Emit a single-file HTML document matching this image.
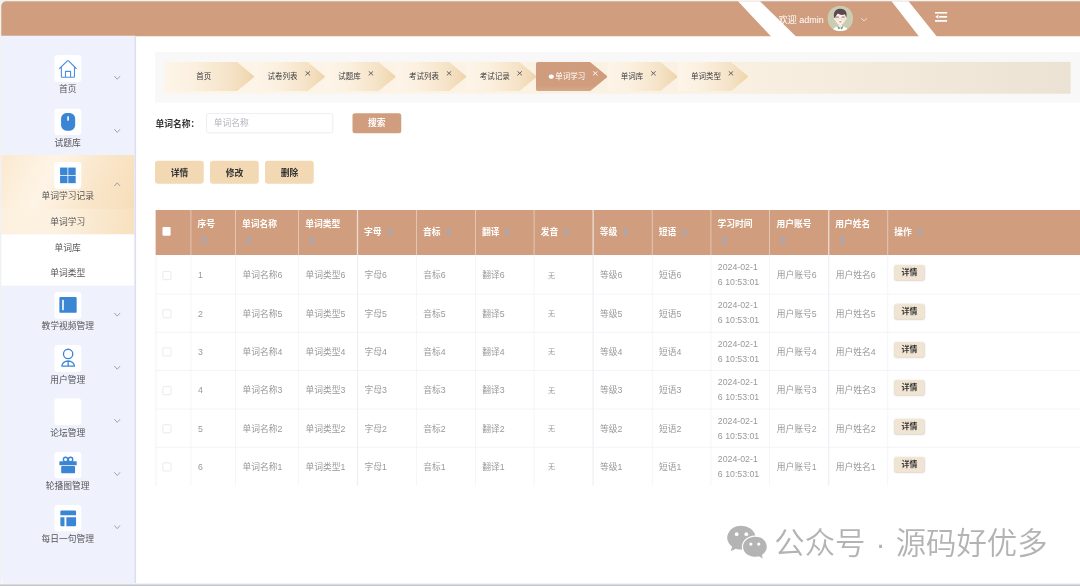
<!DOCTYPE html>
<html lang="zh-CN">
<head>
<meta charset="utf-8">
<title>单词学习</title>
<style>
html,body{width:1080px;height:586px;overflow:hidden;background:#fff;margin:0;padding:0}
body{position:relative}
*{box-sizing:border-box;margin:0;padding:0}
#root{position:absolute;left:0;top:0;width:1728px;height:937.6px;overflow:hidden;background:#fff;font-family:"Liberation Sans","Noto Sans CJK SC",sans-serif;font-size:14px;color:#333}
.abs{position:absolute}
#topline{position:absolute;left:0;top:0;width:1728px;height:1.92px;background:#f4f4f4}
#corner{position:absolute;left:0;top:0;width:11.2px;height:11.2px;background:#f1f1f1}
#leftline{position:absolute;left:0;top:0;width:2.08px;height:937.6px;background:#f1f1f1}
#header{position:absolute;left:2.08px;top:1.92px;width:1725.92px;height:55.84px;background:#d09e7e;border-top-left-radius:8px}
#header svg.stripes{position:absolute;left:-2.08px;top:0;width:1728px;height:64px}
#welcome{position:absolute;left:1243.84px;top:0.96px;height:55.52px;line-height:56.64px;color:#fff;font-size:14.4px;white-space:nowrap}
#avatar{position:absolute;left:1321.92px;top:7.52px;width:40.96px;height:40.96px}
/* sidebar */
#sidebar{position:absolute;left:2.08px;top:57.44px;width:215.52px;height:875.68px;background:#eff1fd;border-right:3.2px solid #dcdff1;border-bottom-left-radius:6.4px;overflow:hidden}
.mi{position:absolute;left:0;width:212.64px;height:85.44px}
.mi .ib{position:absolute;left:84.64px;top:10.88px;width:42.88px;height:42.72px;background:#fff;border-radius:4.8px}
.mi .ib svg{position:absolute;left:0;top:0;width:42.88px;height:42.72px}
.mi .tx{position:absolute;left:0;width:212.64px;top:55.2px;height:20.8px;line-height:20.8px;text-align:center;font-size:14px;color:#555;white-space:nowrap}
.mi .cv{position:absolute;left:180.16px;top:42.56px;width:11.2px;height:8px}
.mi.act{height:87.04px;background:linear-gradient(115deg,#fbe9cf 0%,#fef4e6 35%,#f9e5c8 70%,#f6deba 100%)}
.sub{position:absolute;left:0;width:212.64px;height:41.04px;line-height:42.24px;text-align:center;font-size:14px;color:#555;background:#fff}
.sub.act{background:linear-gradient(100deg,#fdf0de 0%,#fdf2e2 40%,#f7e0bd 100%)}
/* main */
#tagwrap{position:absolute;left:248.48px;top:83.36px;width:1480px;height:80.8px;background:#f8f8f8}
#tagstrip{position:absolute;left:262.72px;top:98.88px;width:1450.56px;height:51.2px;background:linear-gradient(90deg,#fdf5e8 0%,#fbf1e2 60%,#ebe2d4 100%)}
.tag{position:absolute;top:99.04px;height:46.88px;background:linear-gradient(90deg,#fdf5e9 0%,#fcf1e1 28%,#f5e3c7 74%,#eed4ab 100%);clip-path:polygon(0 0,calc(100% - 27.84px) 0,calc(100% - 0.96px) 47%,100% 50%,calc(100% - 0.96px) 53%,calc(100% - 27.84px) 100%,0 100%)}
.tag .t{position:absolute;top:0;height:46.4px;line-height:47.04px;font-size:12px;color:#393b3f;white-space:nowrap}
.tag .x{position:absolute;top:13.92px;width:8.96px;height:8.64px}
.tag.on{background:linear-gradient(180deg,#cf9d7d 0%,#cf9d7d 80%,#d6a98c 100%);border-radius:4.8px 0 0 4.8px}
.tag.on .t{color:#fff}
#lbl{position:absolute;left:248.96px;top:181.6px;height:32px;line-height:32px;font-weight:bold;font-size:14px;color:#333;white-space:nowrap}
#inp{position:absolute;left:329.76px;top:180.8px;width:203.2px;height:32px;border:1px solid #e1e4ea;border-radius:4px;background:#fff;font-size:14px;line-height:31.04px;padding-left:11.2px;color:#b2b5bd;white-space:nowrap}
#sbtn{position:absolute;left:564px;top:180.8px;width:77.76px;height:32.32px;border-radius:4px;background:#d09e7e;color:#fff;font-weight:bold;font-size:14px;text-align:center;line-height:33.6px}
.btn{position:absolute;top:256.8px;width:77.76px;height:37.44px;border-radius:4.8px;background:#f2d9b4;color:#333;font-weight:bold;font-size:14px;text-align:center;line-height:40.64px}
/* table */
#thead{position:absolute;left:249.12px;top:335.68px;width:1480px;height:71.84px;background:#d09e7e}
.th{position:absolute;top:0;height:71.84px;color:#fff;font-weight:bold;font-size:14px;white-space:nowrap;padding-left:10.56px}
.th.one{line-height:70.08px}
.th.two{line-height:45.12px}
.hl{position:absolute;top:0;width:1.12px;height:71.84px;background:#ecdfd7}
.car{position:absolute;width:9.92px;height:13.12px}
.car.c1{top:29.6px}
.car.c2{top:42.08px;left:16.64px}
#tbody{position:absolute;left:249.12px;top:407.52px;width:1480px;height:369.92px}
.vl{position:absolute;top:0;width:1.12px;height:369.6px;background:#eef0f6}
.tr{position:absolute;left:0;width:1480px;height:61.36px;border-bottom:1.12px solid #ebeef5}
.tr.last{border-bottom-color:transparent}
.td{position:absolute;top:0;height:61.36px;line-height:62.24px;color:#999;font-size:14px;padding-left:11.04px;white-space:nowrap}
.td.dt{line-height:24px;padding-top:5.92px}
.td .dtx{display:block;width:68.8px;white-space:normal;word-break:break-all}
.td .wu{font-size:11.2px;padding-left:11.2px;position:relative;top:-1.6px}
.cb{position:absolute;left:10.88px;top:24.32px;width:14px;height:14px;border:1px solid #dcdfe6;border-radius:2.08px;background:#fff}
.dbtn{position:absolute;left:10.56px;top:15.2px;width:48.48px;height:24px;border-radius:4.8px;background:#f0e4d2;box-shadow:0 0.96px 2.4px rgba(120,90,50,.25);color:#333;font-weight:bold;font-size:12.64px;line-height:25.28px;text-align:center}
#wm{word-spacing:2.56px;position:absolute;left:1238.88px;top:833.6px;height:70.4px;line-height:70.4px;font-size:48.64px;color:#b3b3b3;white-space:nowrap;font-weight:350}
#wmicon{position:absolute;left:1161.6px;top:840px;width:65.6px;height:54.4px}
#botline1{position:absolute;left:0;top:933.12px;width:1728px;height:1.92px;background:#f4f2ef}
#botline2{position:absolute;left:0;top:934.88px;width:1728px;height:2.72px;background:#c5c8d1}
#root{transform:scale(.625);transform-origin:0 0;filter:opacity(1)}
</style>
</head>
<body>
<div id="root">
<div id="topline"></div><div id="leftline"></div><div id="corner"></div>
<div id="header">
<svg class="stripes" viewBox="0 0 1080 40" preserveAspectRatio="none"><polygon points="736.9,-1.2 758.8,-1.2 800.9,40 775.5,40" fill="#fff"/><polygon points="890.6,-1.2 907.6,-1.2 940.6,40 922.7,40" fill="#fff"/></svg>
<div id="welcome">欢迎 admin</div>
<svg id="avatar" viewBox="0 0 64 64">
<defs><clipPath id="avc"><circle cx="32" cy="32" r="32"/></clipPath></defs>
<circle cx="32" cy="32" r="32" fill="#cacdb2"/>
<g clip-path="url(#avc)">
<path d="M11.5 67 C12.5 55.5 21 51.8 32 51.8 C43 51.8 51.5 55.5 52.5 67 Z" fill="#fdfdfd"/>
<path d="M27.5 42 h9 v9.5 l-4.5 4.5 l-4.5 -4.5 z" fill="#fbe5d6"/>
<path d="M24.2 50.3 L32 56 L27.8 59.5 Z M39.8 50.3 L32 56 L36.2 59.5 Z" fill="#5d9c80"/>
<path d="M18.5 30 C18.5 22 24 17 32 17 C40 17 45.5 22 45.5 30 C45.5 40 38 47.8 32 47.8 C26 47.8 18.5 40 18.5 30 Z" fill="#fdf0e6"/>
<ellipse cx="18.3" cy="33" rx="1.8" ry="3" fill="#fdf0e6"/><ellipse cx="45.7" cy="33" rx="1.8" ry="3" fill="#fdf0e6"/>
<path d="M17.3 31 C13.5 21 17.5 8.5 31 7.6 C44.5 6.8 50.5 17 46.8 29.5 C45.8 26.5 44.8 23.5 43.5 21.5 C38 24.5 30.5 23.5 26.2 20 C23.5 22.5 20.5 25.5 19.3 31 Z" fill="#5d4552"/>
<path d="M21.3 28.7 h7 M35.7 28.7 h7" stroke="#5f4954" stroke-width="1.9"/>
<circle cx="25" cy="32" r="3.9" fill="none" stroke="#b9aaa9" stroke-width="0.7"/><circle cx="39" cy="32" r="3.9" fill="none" stroke="#b9aaa9" stroke-width="0.7"/>
<path d="M28.9 32 h6.2" stroke="#b9aaa9" stroke-width="0.7"/>
<path d="M27.8 40.4 q4.2 -2.4 8.4 0 q-4.2 3.6 -8.4 0z" fill="#ec6862"/>
</g></svg>
<svg class="abs" style="left:1374.56px;top:25.92px;width:11.2px;height:7.04px" viewBox="0 0 14 8.8"><path d="M1 1.2 L7 7.2 L13 1.2" fill="none" stroke="#fff" stroke-width="1.3"/></svg>
<svg class="abs" style="left:1493.92px;top:17.12px;width:19.52px;height:16px" viewBox="0 0 12.2 10"><rect x="0" y="0" width="12.2" height="1.7" fill="#fff"/><rect x="4.2" y="4.1" width="8" height="1.7" fill="#fff"/><rect x="0" y="8.2" width="12.2" height="1.7" fill="#fff"/><path d="M0.3 4.95 L3.4 2.9 V7 Z" fill="#fff"/></svg>
</div>
<div id="sidebar">
<div class="mi" style="top:19.68px">
<div class="ib"><svg viewBox="0 0 26.8 26.7"><path d="M5.2 13.5 L12.9 5.9 Q13.55 5.3 14.2 5.9 L21.9 13.5 M7 12 V21.4 Q7 22.2 7.8 22.2 H19.3 Q20.1 22.2 20.1 21.4 V12 M11.1 22.2 V16.4 H16.2 V22.2" fill="none" stroke="#4a8fe3" stroke-width="1.1" stroke-linejoin="round" stroke-linecap="round"/></svg></div>
<div class="tx">首页</div>
<svg class="cv" viewBox="0 0 14 10"><path d="M1 2 L7 8.5 L13 2" fill="none" stroke="#83878f" stroke-width="1.5"/></svg>
</div>
<div class="mi" style="top:105.44px">
<div class="ib"><svg viewBox="0 0 26.8 26.7"><rect x="6.7" y="4.3" width="14.1" height="17.6" rx="5.4" ry="5.4" fill="#3b85d5"/><rect x="12.9" y="7.6" width="1.6" height="4.3" fill="#fff"/></svg></div>
<div class="tx">试题库</div>
<svg class="cv" viewBox="0 0 14 10"><path d="M1 2 L7 8.5 L13 2" fill="none" stroke="#83878f" stroke-width="1.5"/></svg>
</div>
<div class="mi act" style="top:190.56px">
<div class="ib"><svg viewBox="0 0 26.8 26.7"><rect x="5.7" y="5.7" width="7.4" height="7.4" fill="#3b85d5"/><rect x="13.9" y="5.7" width="7.4" height="7.4" fill="#3b85d5"/><rect x="5.7" y="13.9" width="7.4" height="7.4" fill="#3b85d5"/><rect x="13.9" y="13.9" width="7.4" height="7.4" fill="#3b85d5"/></svg></div>
<div class="tx">单词学习记录</div>
<svg class="cv" viewBox="0 0 14 10"><path d="M1 8.5 L7 2 L13 8.5" fill="none" stroke="#83878f" stroke-width="1.5"/></svg>
</div>
<div class="mi" style="top:398.88px">
<div class="ib"><svg viewBox="0 0 26.8 26.7"><rect x="5" y="5" width="17.3" height="16" rx="1.2" fill="#3b85d5"/><rect x="7.8" y="8" width="1.6" height="10.3" fill="#fff"/></svg></div>
<div class="tx">教学视频管理</div>
<svg class="cv" viewBox="0 0 14 10"><path d="M1 2 L7 8.5 L13 2" fill="none" stroke="#83878f" stroke-width="1.5"/></svg>
</div>
<div class="mi" style="top:484px">
<div class="ib"><svg viewBox="0 0 26.8 26.7"><circle cx="13.75" cy="8.9" r="4.65" fill="none" stroke="#3b85d5" stroke-width="1.3"/><path d="M7.5 21.2 A6.3 5.2 0 0 1 20.1 21.2 Z M13.8 16 V21.2" fill="none" stroke="#3b85d5" stroke-width="1.3" stroke-linejoin="round"/></svg></div>
<div class="tx">用户管理</div>
<svg class="cv" viewBox="0 0 14 10"><path d="M1 2 L7 8.5 L13 2" fill="none" stroke="#83878f" stroke-width="1.5"/></svg>
</div>
<div class="mi" style="top:569.12px">
<div class="ib"><svg viewBox="0 0 26.8 26.7"></svg></div>
<div class="tx">论坛管理</div>
<svg class="cv" viewBox="0 0 14 10"><path d="M1 2 L7 8.5 L13 2" fill="none" stroke="#83878f" stroke-width="1.5"/></svg>
</div>
<div class="mi" style="top:654.24px">
<div class="ib"><svg viewBox="0 0 26.8 26.7"><rect x="5" y="9.4" width="17.3" height="3.9" rx="0.5" fill="#3b85d5"/><rect x="6.8" y="14.2" width="13.9" height="7.2" rx="0.8" fill="#3b85d5"/><circle cx="11.2" cy="7.6" r="2.2" fill="none" stroke="#3b85d5" stroke-width="1.4"/><circle cx="16.2" cy="7.6" r="2.2" fill="none" stroke="#3b85d5" stroke-width="1.4"/></svg></div>
<div class="tx">轮播图管理</div>
<svg class="cv" viewBox="0 0 14 10"><path d="M1 2 L7 8.5 L13 2" fill="none" stroke="#83878f" stroke-width="1.5"/></svg>
</div>
<div class="mi" style="top:739.36px">
<div class="ib"><svg viewBox="0 0 26.8 26.7"><path d="M6 6.8 a1.2 1.2 0 0 1 1.2 -1.2 h13.3 a1.2 1.2 0 0 1 1.2 1.2 v3.5 h-15.7z" fill="#3b85d5"/><path d="M6 12.2 h4.1 v9.1 h-2.9 a1.2 1.2 0 0 1 -1.2 -1.2z" fill="#3b85d5"/><path d="M12 12.2 h9.7 v7.9 a1.2 1.2 0 0 1 -1.2 1.2 h-8.5z" fill="#3b85d5"/></svg></div>
<div class="tx">每日一句管理</div>
<svg class="cv" viewBox="0 0 14 10"><path d="M1 2 L7 8.5 L13 2" fill="none" stroke="#83878f" stroke-width="1.5"/></svg>
</div>
<div class="sub act" style="top:276.16px">单词学习</div>
<div class="sub" style="top:317.168px">单词库</div>
<div class="sub" style="top:358.176px">单词类型</div>
</div>
<div id="tagwrap"></div><div id="tagstrip"></div>
<div class="tag" style="left:262.72px;width:144px">
<div class="t" style="left:0;width:116.16px;text-align:center;padding-left:10.4px">首页</div>
</div>
<div class="tag" style="left:406.72px;width:113.28px">
<div class="t" style="left:21.28px">试卷列表</div>
<svg class="x" style="left:80.96px" viewBox="0 0 10 10"><path d="M0.8 1.2 L9.2 8.8 M9.2 1.2 L0.8 8.8" stroke="#55575b" stroke-width="1.7" fill="none"/></svg>
</div>
<div class="tag" style="left:520px;width:113.12px">
<div class="t" style="left:21.28px">试题库</div>
<svg class="x" style="left:68.96px" viewBox="0 0 10 10"><path d="M0.8 1.2 L9.2 8.8 M9.2 1.2 L0.8 8.8" stroke="#55575b" stroke-width="1.7" fill="none"/></svg>
</div>
<div class="tag" style="left:633.12px;width:113.12px">
<div class="t" style="left:21.28px">考试列表</div>
<svg class="x" style="left:80.96px" viewBox="0 0 10 10"><path d="M0.8 1.2 L9.2 8.8 M9.2 1.2 L0.8 8.8" stroke="#55575b" stroke-width="1.7" fill="none"/></svg>
</div>
<div class="tag" style="left:746.24px;width:112.32px">
<div class="t" style="left:21.28px">考试记录</div>
<svg class="x" style="left:80.96px" viewBox="0 0 10 10"><path d="M0.8 1.2 L9.2 8.8 M9.2 1.2 L0.8 8.8" stroke="#55575b" stroke-width="1.7" fill="none"/></svg>
</div>
<div class="tag on" style="left:857.28px;width:114.56px">
<div class="abs" style="left:20.96px;top:19.68px;width:7.36px;height:7.36px;border-radius:50%;background:#fff"></div>
<div class="t" style="left:31.04px">单词学习</div>
<svg class="x" style="left:90.72px" viewBox="0 0 10 10"><path d="M0.8 1.2 L9.2 8.8 M9.2 1.2 L0.8 8.8" stroke="#fff" stroke-width="1.7" fill="none"/></svg>
</div>
<div class="tag" style="left:971.84px;width:112.32px">
<div class="t" style="left:21.28px">单词库</div>
<svg class="x" style="left:68.96px" viewBox="0 0 10 10"><path d="M0.8 1.2 L9.2 8.8 M9.2 1.2 L0.8 8.8" stroke="#55575b" stroke-width="1.7" fill="none"/></svg>
</div>
<div class="tag" style="left:1084.16px;width:112.96px">
<div class="t" style="left:21.28px">单词类型</div>
<svg class="x" style="left:80.96px" viewBox="0 0 10 10"><path d="M0.8 1.2 L9.2 8.8 M9.2 1.2 L0.8 8.8" stroke="#55575b" stroke-width="1.7" fill="none"/></svg>
</div>
<div id="lbl">单词名称：</div><div id="inp">单词名称</div><div id="sbtn">搜索</div>
<div class="btn" style="left:248.48px">详情</div>
<div class="btn" style="left:336.32px">修改</div>
<div class="btn" style="left:424.16px">删除</div>
<div id="thead">
<div class="th" style="left:0px;width:56.48px"><div class="abs" style="left:10.4px;top:27.36px;width:13.92px;height:13.76px;border-radius:1.92px;background:#fff"></div></div>
<div class="th two" style="left:56.48px;width:71.2px">序号<svg class="car c2" style="" viewBox="0 0 6.2 8.2"><polygon points="0,3.25 3.1,0 6.2,3.25" fill="#a3a9b9"/><polygon points="0,4.8 6.2,4.8 3.1,8.2" fill="#a0a8ba"/></svg></div>
<div class="th two" style="left:127.68px;width:100.96px">单词名称<svg class="car c2" style="" viewBox="0 0 6.2 8.2"><polygon points="0,3.25 3.1,0 6.2,3.25" fill="#a3a9b9"/><polygon points="0,4.8 6.2,4.8 3.1,8.2" fill="#a0a8ba"/></svg></div>
<div class="th two" style="left:228.64px;width:94.256px">单词类型<svg class="car c2" style="" viewBox="0 0 6.2 8.2"><polygon points="0,3.25 3.1,0 6.2,3.25" fill="#a3a9b9"/><polygon points="0,4.8 6.2,4.8 3.1,8.2" fill="#a0a8ba"/></svg></div>
<div class="th one" style="left:322.896px;width:94.256px">字母<svg class="car c1" style="left:46.88px" viewBox="0 0 6.2 8.2"><polygon points="0,3.25 3.1,0 6.2,3.25" fill="#a3a9b9"/><polygon points="0,4.8 6.2,4.8 3.1,8.2" fill="#a0a8ba"/></svg></div>
<div class="th one" style="left:417.152px;width:94.256px">音标<svg class="car c1" style="left:46.88px" viewBox="0 0 6.2 8.2"><polygon points="0,3.25 3.1,0 6.2,3.25" fill="#a3a9b9"/><polygon points="0,4.8 6.2,4.8 3.1,8.2" fill="#a0a8ba"/></svg></div>
<div class="th one" style="left:511.408px;width:94.256px">翻译<svg class="car c1" style="left:46.88px" viewBox="0 0 6.2 8.2"><polygon points="0,3.25 3.1,0 6.2,3.25" fill="#a3a9b9"/><polygon points="0,4.8 6.2,4.8 3.1,8.2" fill="#a0a8ba"/></svg></div>
<div class="th one" style="left:605.664px;width:94.256px">发音<svg class="car c1" style="left:46.88px" viewBox="0 0 6.2 8.2"><polygon points="0,3.25 3.1,0 6.2,3.25" fill="#a3a9b9"/><polygon points="0,4.8 6.2,4.8 3.1,8.2" fill="#a0a8ba"/></svg></div>
<div class="th one" style="left:699.92px;width:94.256px">等级<svg class="car c1" style="left:46.88px" viewBox="0 0 6.2 8.2"><polygon points="0,3.25 3.1,0 6.2,3.25" fill="#a3a9b9"/><polygon points="0,4.8 6.2,4.8 3.1,8.2" fill="#a0a8ba"/></svg></div>
<div class="th one" style="left:794.176px;width:94.256px">短语<svg class="car c1" style="left:46.88px" viewBox="0 0 6.2 8.2"><polygon points="0,3.25 3.1,0 6.2,3.25" fill="#a3a9b9"/><polygon points="0,4.8 6.2,4.8 3.1,8.2" fill="#a0a8ba"/></svg></div>
<div class="th two" style="left:888.432px;width:94.256px">学习时间<svg class="car c2" style="" viewBox="0 0 6.2 8.2"><polygon points="0,3.25 3.1,0 6.2,3.25" fill="#a3a9b9"/><polygon points="0,4.8 6.2,4.8 3.1,8.2" fill="#a0a8ba"/></svg></div>
<div class="th two" style="left:982.688px;width:94.256px">用户账号<svg class="car c2" style="" viewBox="0 0 6.2 8.2"><polygon points="0,3.25 3.1,0 6.2,3.25" fill="#a3a9b9"/><polygon points="0,4.8 6.2,4.8 3.1,8.2" fill="#a0a8ba"/></svg></div>
<div class="th two" style="left:1076.944px;width:94.256px">用户姓名<svg class="car c2" style="" viewBox="0 0 6.2 8.2"><polygon points="0,3.25 3.1,0 6.2,3.25" fill="#a3a9b9"/><polygon points="0,4.8 6.2,4.8 3.1,8.2" fill="#a0a8ba"/></svg></div>
<div class="th one" style="left:1171.2px;width:309.28px">操作<svg class="car c1" style="left:46.88px" viewBox="0 0 6.2 8.2"><polygon points="0,3.25 3.1,0 6.2,3.25" fill="#a3a9b9"/><polygon points="0,4.8 6.2,4.8 3.1,8.2" fill="#a0a8ba"/></svg></div>
<div class="hl" style="left:55.92px"></div>
<div class="hl" style="left:127.12px"></div>
<div class="hl" style="left:228.08px"></div>
<div class="hl" style="left:322.336px"></div>
<div class="hl" style="left:416.592px"></div>
<div class="hl" style="left:510.848px"></div>
<div class="hl" style="left:605.104px"></div>
<div class="hl" style="left:699.36px"></div>
<div class="hl" style="left:793.616px"></div>
<div class="hl" style="left:887.872px"></div>
<div class="hl" style="left:982.128px"></div>
<div class="hl" style="left:1076.384px"></div>
<div class="hl" style="left:1170.64px"></div>
</div>
<div id="tbody">
<div class="tr" style="top:1.68px">
<div class="td" style="left:0px;width:56.48px"><div class="cb"></div></div>
<div class="td" style="left:56.48px;width:71.2px">1</div>
<div class="td" style="left:127.68px;width:100.96px">单词名称6</div>
<div class="td" style="left:228.64px;width:94.256px">单词类型6</div>
<div class="td" style="left:322.896px;width:94.256px">字母6</div>
<div class="td" style="left:417.152px;width:94.256px">音标6</div>
<div class="td" style="left:511.408px;width:94.256px">翻译6</div>
<div class="td" style="left:605.664px;width:94.256px"><span class="wu">无</span></div>
<div class="td" style="left:699.92px;width:94.256px">等级6</div>
<div class="td" style="left:794.176px;width:94.256px">短语6</div>
<div class="td dt" style="left:888.432px;width:94.256px"><span class="dtx">2024-02-16 10:53:01</span></div>
<div class="td" style="left:982.688px;width:94.256px">用户账号6</div>
<div class="td" style="left:1076.944px;width:94.256px">用户姓名6</div>
<div class="td" style="left:1171.2px;width:309.28px"><div class="dbtn">详情</div></div>
</div>
<div class="tr" style="top:63.04px">
<div class="td" style="left:0px;width:56.48px"><div class="cb"></div></div>
<div class="td" style="left:56.48px;width:71.2px">2</div>
<div class="td" style="left:127.68px;width:100.96px">单词名称5</div>
<div class="td" style="left:228.64px;width:94.256px">单词类型5</div>
<div class="td" style="left:322.896px;width:94.256px">字母5</div>
<div class="td" style="left:417.152px;width:94.256px">音标5</div>
<div class="td" style="left:511.408px;width:94.256px">翻译5</div>
<div class="td" style="left:605.664px;width:94.256px"><span class="wu">无</span></div>
<div class="td" style="left:699.92px;width:94.256px">等级5</div>
<div class="td" style="left:794.176px;width:94.256px">短语5</div>
<div class="td dt" style="left:888.432px;width:94.256px"><span class="dtx">2024-02-16 10:53:01</span></div>
<div class="td" style="left:982.688px;width:94.256px">用户账号5</div>
<div class="td" style="left:1076.944px;width:94.256px">用户姓名5</div>
<div class="td" style="left:1171.2px;width:309.28px"><div class="dbtn">详情</div></div>
</div>
<div class="tr" style="top:124.4px">
<div class="td" style="left:0px;width:56.48px"><div class="cb"></div></div>
<div class="td" style="left:56.48px;width:71.2px">3</div>
<div class="td" style="left:127.68px;width:100.96px">单词名称4</div>
<div class="td" style="left:228.64px;width:94.256px">单词类型4</div>
<div class="td" style="left:322.896px;width:94.256px">字母4</div>
<div class="td" style="left:417.152px;width:94.256px">音标4</div>
<div class="td" style="left:511.408px;width:94.256px">翻译4</div>
<div class="td" style="left:605.664px;width:94.256px"><span class="wu">无</span></div>
<div class="td" style="left:699.92px;width:94.256px">等级4</div>
<div class="td" style="left:794.176px;width:94.256px">短语4</div>
<div class="td dt" style="left:888.432px;width:94.256px"><span class="dtx">2024-02-16 10:53:01</span></div>
<div class="td" style="left:982.688px;width:94.256px">用户账号4</div>
<div class="td" style="left:1076.944px;width:94.256px">用户姓名4</div>
<div class="td" style="left:1171.2px;width:309.28px"><div class="dbtn">详情</div></div>
</div>
<div class="tr" style="top:185.76px">
<div class="td" style="left:0px;width:56.48px"><div class="cb"></div></div>
<div class="td" style="left:56.48px;width:71.2px">4</div>
<div class="td" style="left:127.68px;width:100.96px">单词名称3</div>
<div class="td" style="left:228.64px;width:94.256px">单词类型3</div>
<div class="td" style="left:322.896px;width:94.256px">字母3</div>
<div class="td" style="left:417.152px;width:94.256px">音标3</div>
<div class="td" style="left:511.408px;width:94.256px">翻译3</div>
<div class="td" style="left:605.664px;width:94.256px"><span class="wu">无</span></div>
<div class="td" style="left:699.92px;width:94.256px">等级3</div>
<div class="td" style="left:794.176px;width:94.256px">短语3</div>
<div class="td dt" style="left:888.432px;width:94.256px"><span class="dtx">2024-02-16 10:53:01</span></div>
<div class="td" style="left:982.688px;width:94.256px">用户账号3</div>
<div class="td" style="left:1076.944px;width:94.256px">用户姓名3</div>
<div class="td" style="left:1171.2px;width:309.28px"><div class="dbtn">详情</div></div>
</div>
<div class="tr" style="top:247.12px">
<div class="td" style="left:0px;width:56.48px"><div class="cb"></div></div>
<div class="td" style="left:56.48px;width:71.2px">5</div>
<div class="td" style="left:127.68px;width:100.96px">单词名称2</div>
<div class="td" style="left:228.64px;width:94.256px">单词类型2</div>
<div class="td" style="left:322.896px;width:94.256px">字母2</div>
<div class="td" style="left:417.152px;width:94.256px">音标2</div>
<div class="td" style="left:511.408px;width:94.256px">翻译2</div>
<div class="td" style="left:605.664px;width:94.256px"><span class="wu">无</span></div>
<div class="td" style="left:699.92px;width:94.256px">等级2</div>
<div class="td" style="left:794.176px;width:94.256px">短语2</div>
<div class="td dt" style="left:888.432px;width:94.256px"><span class="dtx">2024-02-16 10:53:01</span></div>
<div class="td" style="left:982.688px;width:94.256px">用户账号2</div>
<div class="td" style="left:1076.944px;width:94.256px">用户姓名2</div>
<div class="td" style="left:1171.2px;width:309.28px"><div class="dbtn">详情</div></div>
</div>
<div class="tr last" style="top:308.48px">
<div class="td" style="left:0px;width:56.48px"><div class="cb"></div></div>
<div class="td" style="left:56.48px;width:71.2px">6</div>
<div class="td" style="left:127.68px;width:100.96px">单词名称1</div>
<div class="td" style="left:228.64px;width:94.256px">单词类型1</div>
<div class="td" style="left:322.896px;width:94.256px">字母1</div>
<div class="td" style="left:417.152px;width:94.256px">音标1</div>
<div class="td" style="left:511.408px;width:94.256px">翻译1</div>
<div class="td" style="left:605.664px;width:94.256px"><span class="wu">无</span></div>
<div class="td" style="left:699.92px;width:94.256px">等级1</div>
<div class="td" style="left:794.176px;width:94.256px">短语1</div>
<div class="td dt" style="left:888.432px;width:94.256px"><span class="dtx">2024-02-16 10:53:01</span></div>
<div class="td" style="left:982.688px;width:94.256px">用户账号1</div>
<div class="td" style="left:1076.944px;width:94.256px">用户姓名1</div>
<div class="td" style="left:1171.2px;width:309.28px"><div class="dbtn">详情</div></div>
</div>
<div class="vl" style="left:0;background:#e9ebf3"></div>
<div class="vl" style="left:55.92px"></div>
<div class="vl" style="left:127.12px"></div>
<div class="vl" style="left:228.08px"></div>
<div class="vl" style="left:322.336px"></div>
<div class="vl" style="left:416.592px"></div>
<div class="vl" style="left:510.848px"></div>
<div class="vl" style="left:605.104px"></div>
<div class="vl" style="left:699.36px"></div>
<div class="vl" style="left:793.616px"></div>
<div class="vl" style="left:887.872px"></div>
<div class="vl" style="left:982.128px"></div>
<div class="vl" style="left:1076.384px"></div>
<div class="vl" style="left:1170.64px"></div>
</div>
<svg id="wmicon" viewBox="0 0 41 34"><g fill="#b4b4b4">
<path d="M15.1 0.8 A14.1 11.9 0 0 0 5.9 21.72 L4.4 26.3 L9.6 23.66 A14.1 11.9 0 0 0 16 24.58 A13.1 11.2 0 0 1 29 10.61 A14.1 11.9 0 0 0 15.1 0.8 Z"/>
<path d="M28.7 11.8 A11.9 10 0 1 0 32.5 31.28 L36.7 33.6 L35.5 30 A11.9 10 0 0 0 28.7 11.8 Z"/></g>
<g fill="#fff"><circle cx="10.4" cy="9.15" r="1.9"/><circle cx="20.05" cy="9.15" r="1.9"/><circle cx="24.6" cy="19.05" r="1.6"/><circle cx="32.5" cy="19.05" r="1.6"/></g></svg>
<div id="wm">公众号 · 源码好优多</div>
<div id="botline1"></div><div id="botline2"></div>
</div>
</body>
</html>
